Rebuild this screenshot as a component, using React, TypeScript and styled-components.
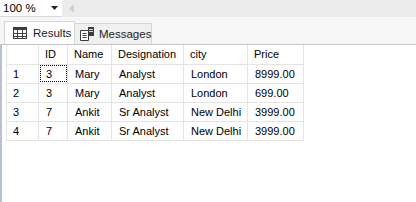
import React from 'react';
import styled, { createGlobalStyle } from 'styled-components';

const GlobalStyle = createGlobalStyle`
  html, body {
    margin: 0;
    padding: 0;
    background: #ffffff;
  }
  body {
    font-family: "Liberation Sans", Arial, sans-serif;
    font-size: 11px;
    color: #000;
  }
`;

const Window = styled.div`
  width: 416px;
  height: 202px;
  display: flex;
  flex-direction: column;
  background: #ffffff;
  overflow: hidden;
`;

const Toolbar = styled.div`
  height: 17px;
  display: flex;
  align-items: stretch;
  background: #ececec;
`;

const ZoomCombo = styled.div`
  width: 62px;
  display: flex;
  align-items: center;
  justify-content: space-between;
  padding: 0 4px 0 3px;
  box-sizing: border-box;
  background: #ffffff;
  border-bottom: 1px solid #dadada;
  font-size: 11.5px;
`;

const ScrollArrow = styled.div`
  width: 14px;
  display: flex;
  align-items: center;
  justify-content: center;
  margin-left: 2px;
`;

const TabStrip = styled.div`
  height: 26px;
  display: flex;
  align-items: flex-end;
  padding-left: 4px;
  background: #f6f6f6;
  border-top: 1px solid #f9f9f9;
  border-bottom: 1px solid #c4c4c4;
`;

const Tab = styled.div<{ active?: boolean }>`
  height: ${p => (p.active ? '23px' : '21px')};
  display: flex;
  align-items: center;
  gap: ${p => (p.active ? '6px' : '4px')};
  padding: 0 4px 0 ${p => (p.active ? '8px' : '5px')};
  box-sizing: border-box;
  background: ${p => (p.active ? '#ffffff' : '#f0f0f0')};
  border: 1px solid #d6d6d6;
  border-bottom: none;
  font-size: 11.5px;
  color: #1e1e1e;
  margin-right: -1px;
  width: ${p => (p.active ? '71px' : '78px')};

  svg {
    flex-shrink: 0;
  }
`;

const Panel = styled.div`
  flex: 1;
  display: flex;
  border-left: 2px solid #b8c2d6;
  padding-left: 4px;
`;

const Grid = styled.table`
  border-collapse: collapse;
  table-layout: fixed;
  align-self: flex-start;
`;

const HeadCell = styled.th<{ w: number }>`
  width: ${p => p.w}px;
  height: 19px;
  padding: 0 0 0 6px;
  text-align: left;
  font-weight: normal;
  border: 1px solid #e4e4e4;
  border-top: none;
  white-space: nowrap;
  box-sizing: border-box;
`;

const Cell = styled.td<{ focus?: boolean }>`
  height: 19px;
  padding: 0 0 0 7px;
  border: 1px solid #e4e4e4;
  white-space: nowrap;
  box-sizing: border-box;
  outline: ${p => (p.focus ? '1px dotted #000' : 'none')};
  outline-offset: -2px;
`;

const RowNum = styled(Cell)`
  padding-left: 6px;
`;

const GridIcon = () => (
  <svg width="14" height="12" viewBox="0 0 14 12">
    <rect x="0.5" y="0.5" width="13" height="11" fill="#fff" stroke="#3c3c3c" />
    <rect x="0.5" y="0.5" width="13" height="2.5" fill="#3c3c3c" />
    <path d="M0.5 6.5H13.5M0.5 9.5H13.5M4.5 0.5V11.5M9.5 0.5V11.5" stroke="#3c3c3c" />
  </svg>
);

const MessagesIcon = () => (
  <svg width="15" height="14" viewBox="0 0 15 14">
    <path d="M0.5 3.5H8.5V13.5H0.5Z" fill="#fff" stroke="#3c3c3c" />
    <path d="M2.5 6.5H6.5M2.5 8.5H6.5M2.5 10.5H6.5" stroke="#3c3c3c" />
    <rect x="8" y="0" width="6" height="9" fill="#3c3c3c" />
    <path d="M9 2.5H13M9 4.5H13" stroke="#ffffff" strokeWidth="0.8" />
  </svg>
);

const columns = [
  { key: 'rn', label: '', w: 32 },
  { key: 'id', label: 'ID', w: 29 },
  { key: 'name', label: 'Name', w: 44 },
  { key: 'designation', label: 'Designation', w: 72 },
  { key: 'city', label: 'city', w: 64 },
  { key: 'price', label: 'Price', w: 56 },
];

const rows = [
  { id: 3, name: 'Mary', designation: 'Analyst', city: 'London', price: '8999.00' },
  { id: 3, name: 'Mary', designation: 'Analyst', city: 'London', price: '699.00' },
  { id: 7, name: 'Ankit', designation: 'Sr Analyst', city: 'New Delhi', price: '3999.00' },
  { id: 7, name: 'Ankit', designation: 'Sr Analyst', city: 'New Delhi', price: '3999.00' },
];

export default function App() {
  return (
    <Window>
      <GlobalStyle />
      <Toolbar>
        <ZoomCombo>
          <span>100 %</span>
          <svg width="7" height="4" viewBox="0 0 7 4">
            <path d="M0 0H7L3.5 4Z" fill="#222" />
          </svg>
        </ZoomCombo>
        <ScrollArrow>
          <svg width="5" height="9" viewBox="0 0 5 9">
            <path d="M5 0V9L0 4.5Z" fill="#d0d0d0" />
          </svg>
        </ScrollArrow>
      </Toolbar>
      <TabStrip>
        <Tab active>
          <GridIcon />
          <span>Results</span>
        </Tab>
        <Tab>
          <MessagesIcon />
          <span>Messages</span>
        </Tab>
      </TabStrip>
      <Panel>
        <Grid>
          <thead>
            <tr>
              {columns.map(c => (
                <HeadCell key={c.key} w={c.w}>{c.label}</HeadCell>
              ))}
            </tr>
          </thead>
          <tbody>
            {rows.map((r, i) => (
              <tr key={i}>
                <RowNum>{i + 1}</RowNum>
                <Cell focus={i === 0}>{r.id}</Cell>
                <Cell>{r.name}</Cell>
                <Cell>{r.designation}</Cell>
                <Cell>{r.city}</Cell>
                <Cell>{r.price}</Cell>
              </tr>
            ))}
          </tbody>
        </Grid>
      </Panel>
    </Window>
  );
}
